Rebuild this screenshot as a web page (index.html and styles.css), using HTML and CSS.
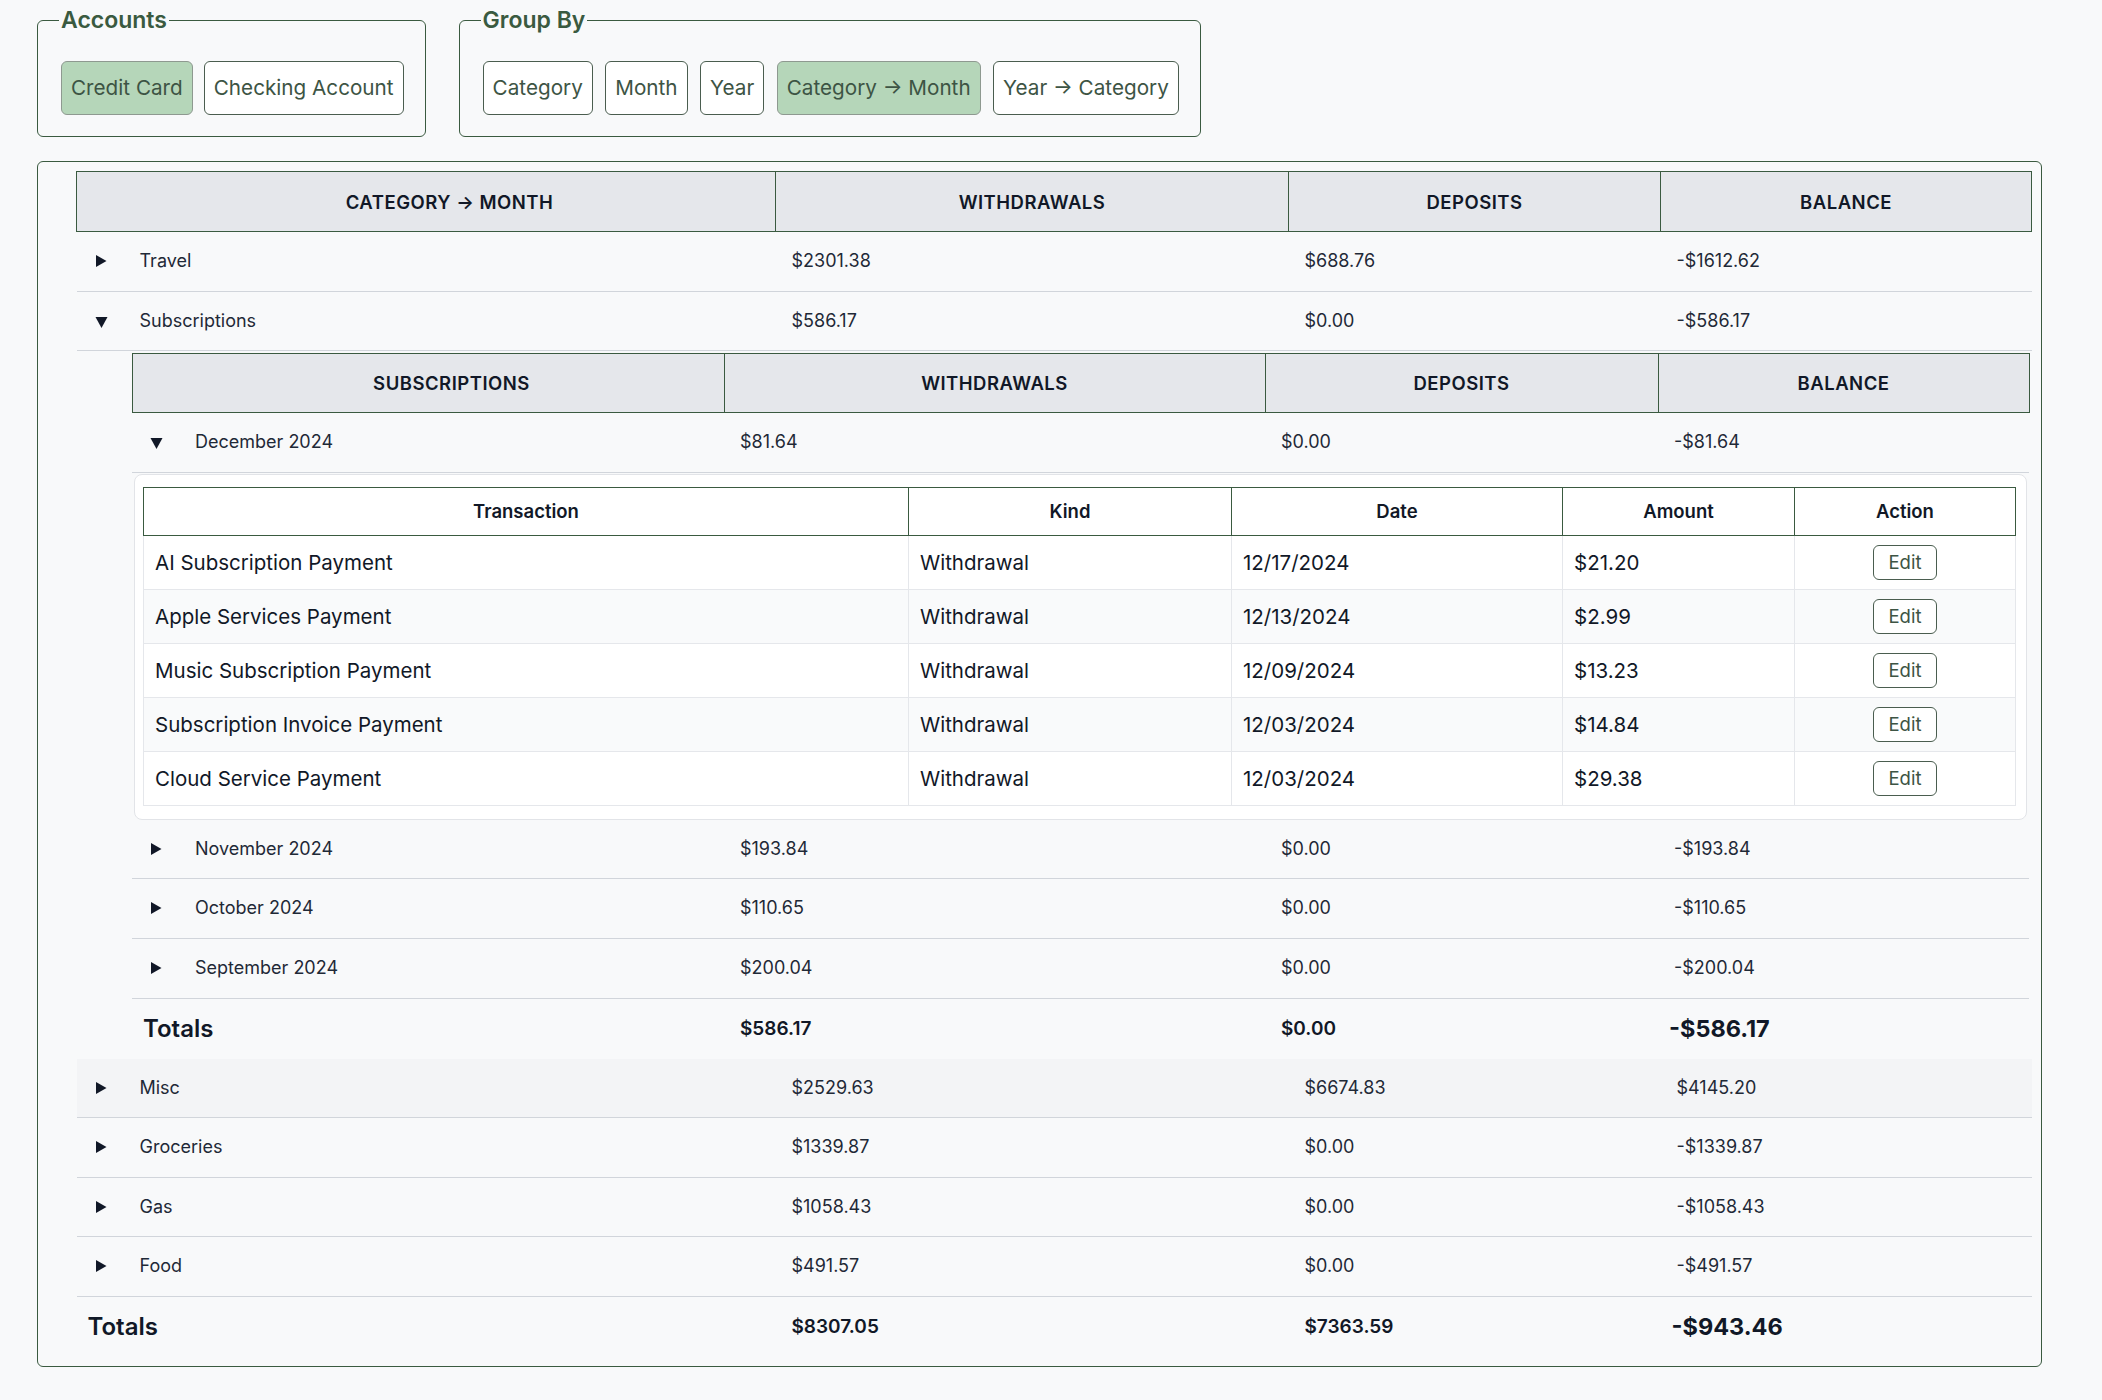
FILE: index.html
```html
<!DOCTYPE html>
<html lang="en">
<head>
<meta charset="utf-8">
<title>Report</title>
<link rel="stylesheet" href="styles.css">
</head>
<body>
<div class="page">
  <div class="filters">
    <fieldset class="group">
      <legend>Accounts</legend>
      <div class="btns">
        <button class="pill active">Credit Card</button>
        <button class="pill">Checking Account</button>
      </div>
    </fieldset>
    <fieldset class="group group-by">
      <legend>Group By</legend>
      <div class="btns">
        <button class="pill">Category</button>
        <button class="pill">Month</button>
        <button class="pill">Year</button>
        <button class="pill active">Category → Month</button>
        <button class="pill">Year → Category</button>
      </div>
    </fieldset>
  </div>

  <div class="panel">
    <table class="report main">
      <colgroup><col class="m1"><col class="m2"><col class="m3"><col class="m4"></colgroup>
      <thead>
        <tr><th class="first">Category → Month</th><th>Withdrawals</th><th>Deposits</th><th>Balance</th></tr>
      </thead>
      <tbody>
        <tr class="row">
          <td class="name"><span class="tog"><svg class="tri-r" viewBox="0 0 12 14"><path d="M1 1L11.5 7L1 13Z"/></svg></span>Travel</td>
          <td>$2301.38</td><td>$688.76</td><td>-$1612.62</td>
        </tr>
        <tr class="row">
          <td class="name"><span class="tog"><svg class="tri-d" viewBox="0 0 12 12"><path d="M0 1H12L6 12Z"/></svg></span>Subscriptions</td>
          <td>$586.17</td><td>$0.00</td><td>-$586.17</td>
        </tr>
        <tr class="nest-row">
          <td class="nest" colspan="4">
            <table class="report sub">
              <colgroup><col class="s1"><col class="s2"><col class="s3"><col class="s4"></colgroup>
              <thead>
                <tr><th class="first">Subscriptions</th><th>Withdrawals</th><th>Deposits</th><th>Balance</th></tr>
              </thead>
              <tbody>
                <tr class="row">
                  <td class="name"><span class="tog"><svg class="tri-d" viewBox="0 0 12 12"><path d="M0 1H12L6 12Z"/></svg></span>December 2024</td>
                  <td>$81.64</td><td>$0.00</td><td>-$81.64</td>
                </tr>
                <tr class="card-row">
                  <td class="card-cell" colspan="4">
                    <div class="card">
                      <table class="tx">
                        <colgroup><col class="t1"><col class="t2"><col class="t3"><col class="t4"><col class="t5"></colgroup>
                        <thead>
                          <tr><th>Transaction</th><th>Kind</th><th>Date</th><th>Amount</th><th>Action</th></tr>
                        </thead>
                        <tbody>
                          <tr><td>AI Subscription Payment</td><td>Withdrawal</td><td>12/17/2024</td><td>$21.20</td><td class="act"><button class="edit">Edit</button></td></tr>
                          <tr><td>Apple Services Payment</td><td>Withdrawal</td><td>12/13/2024</td><td>$2.99</td><td class="act"><button class="edit">Edit</button></td></tr>
                          <tr><td>Music Subscription Payment</td><td>Withdrawal</td><td>12/09/2024</td><td>$13.23</td><td class="act"><button class="edit">Edit</button></td></tr>
                          <tr><td>Subscription Invoice Payment</td><td>Withdrawal</td><td>12/03/2024</td><td>$14.84</td><td class="act"><button class="edit">Edit</button></td></tr>
                          <tr><td>Cloud Service Payment</td><td>Withdrawal</td><td>12/03/2024</td><td>$29.38</td><td class="act"><button class="edit">Edit</button></td></tr>
                        </tbody>
                      </table>
                    </div>
                  </td>
                </tr>
                <tr class="row">
                  <td class="name"><span class="tog"><svg class="tri-r" viewBox="0 0 12 14"><path d="M1 1L11.5 7L1 13Z"/></svg></span>November 2024</td>
                  <td>$193.84</td><td>$0.00</td><td>-$193.84</td>
                </tr>
                <tr class="row">
                  <td class="name"><span class="tog"><svg class="tri-r" viewBox="0 0 12 14"><path d="M1 1L11.5 7L1 13Z"/></svg></span>October 2024</td>
                  <td>$110.65</td><td>$0.00</td><td>-$110.65</td>
                </tr>
                <tr class="row">
                  <td class="name"><span class="tog"><svg class="tri-r" viewBox="0 0 12 14"><path d="M1 1L11.5 7L1 13Z"/></svg></span>September 2024</td>
                  <td>$200.04</td><td>$0.00</td><td>-$200.04</td>
                </tr>
                <tr class="totals">
                  <td class="tot-label">Totals</td>
                  <td class="tot-val">$586.17</td><td class="tot-val">$0.00</td><td class="tot-bal">-$586.17</td>
                </tr>
              </tbody>
            </table>
          </td>
        </tr>
        <tr class="row hover">
          <td class="name"><span class="tog"><svg class="tri-r" viewBox="0 0 12 14"><path d="M1 1L11.5 7L1 13Z"/></svg></span>Misc</td>
          <td>$2529.63</td><td>$6674.83</td><td>$4145.20</td>
        </tr>
        <tr class="row">
          <td class="name"><span class="tog"><svg class="tri-r" viewBox="0 0 12 14"><path d="M1 1L11.5 7L1 13Z"/></svg></span>Groceries</td>
          <td>$1339.87</td><td>$0.00</td><td>-$1339.87</td>
        </tr>
        <tr class="row">
          <td class="name"><span class="tog"><svg class="tri-r" viewBox="0 0 12 14"><path d="M1 1L11.5 7L1 13Z"/></svg></span>Gas</td>
          <td>$1058.43</td><td>$0.00</td><td>-$1058.43</td>
        </tr>
        <tr class="row">
          <td class="name"><span class="tog"><svg class="tri-r" viewBox="0 0 12 14"><path d="M1 1L11.5 7L1 13Z"/></svg></span>Food</td>
          <td>$491.57</td><td>$0.00</td><td>-$491.57</td>
        </tr>
        <tr class="totals">
          <td class="tot-label">Totals</td>
          <td class="tot-val">$8307.05</td><td class="tot-val">$7363.59</td><td class="tot-bal">-$943.46</td>
        </tr>
      </tbody>
    </table>
  </div>
</div>
</body>
</html>
```

FILE: styles.css
```css
* { box-sizing: border-box; }

body {
  margin: 0;
  background: #f8f9fa;
  font-family: Inter, "Liberation Sans", sans-serif;
  color: #1f2937;
}

.page {
  padding: 7px 60px 33px 37px;
}

/* ---------- filters ---------- */
.filters {
  display: flex;
  align-items: flex-start;
  gap: 33px;
}

.group {
  margin: 0;
  min-width: 0;
  border: 1px solid #3a5a40;
  border-radius: 6px;
  padding: 28px 21px 21px 23px;
}

.group legend {
  padding: 0 2px;
  margin-left: -2px;
  font-size: 23px;
  font-weight: 600;
  line-height: 26px;
  color: #3a5a40;
}

.btns {
  display: flex;
  gap: 11px;
}

.group-by .btns {
  gap: 12.5px;
}

.pill {
  font-family: inherit;
  font-size: 20.7px;
  line-height: 24px;
  padding: 14px 9px;
  border: 1px solid #4a5d4f;
  border-radius: 6px;
  background: #ffffff;
  color: #3d5444;
}

.pill.active {
  background: #b5d6b9;
  border-color: #8e9990;
}

/* ---------- report panel ---------- */
.panel {
  margin-top: 24px;
  border: 1px solid #3a5a40;
  border-radius: 6px;
  padding: 9px 10px 9px 38px;
}

.report {
  width: 100%;
  border-collapse: collapse;
  table-layout: fixed;
}

.main .m1 { width: 699px; }
.main .m2 { width: 513px; }
.main .m3 { width: 372px; }
.main .m4 { width: 371px; }

.sub .s1 { width: 592px; }
.sub .s2 { width: 541px; }
.sub .s3 { width: 393px; }
.sub .s4 { width: 371px; }

.report th {
  background: #e5e7eb;
  border: 1px solid #3a5a40;
  color: #111827;
  font-size: 18.5px;
  font-weight: 600;
  text-transform: uppercase;
  letter-spacing: 0.5px;
  line-height: 26px;
  padding: 16.5px 16px;
  text-align: center;
}

.report th.first {
  padding-left: 63px;
}

.sub th {
  padding-top: 16px;
  padding-bottom: 16px;
}

.report td {
  padding: 17px 16px;
  font-size: 18px;
  line-height: 24.6px;
  border-bottom: 1px solid #d1d5db;
  color: #1f2937;
  white-space: nowrap;
}

.report td.name {
  padding-left: 18px;
}

.tog {
  display: inline-block;
  width: 45px;
}

.tri-r {
  width: 12px;
  height: 14px;
  fill: #111827;
  vertical-align: -1px;
}

.tri-d {
  width: 13px;
  height: 12px;
  fill: #111827;
  vertical-align: -1px;
}

.report tr.hover td {
  background: #f3f4f6;
}

.report td.nest {
  padding: 2px 3px 0 55px;
  border-bottom: none;
}

.report td.card-cell {
  padding: 1px 2px 0 2px;
  border-bottom: none;
}

.report tr.totals td {
  border-top: 1px solid #3a5a40;
  border-bottom: none;
  line-height: 26px;
  padding: 17px 16px;
  color: #111827;
}

.report tr.totals td.tot-label {
  padding-left: 11px;
  font-size: 24px;
  font-weight: 600;
}

.report tr.totals td.tot-val {
  font-size: 19px;
  font-weight: 600;
}

.report tr.totals td.tot-bal {
  padding-left: 11px;
  font-size: 23.5px;
  font-weight: 700;
}

/* ---------- transactions card ---------- */
.card {
  background: #ffffff;
  border: 1px solid #e2e4e8;
  border-radius: 8px;
  padding: 12px 10px 13px 8px;
}

.tx {
  width: 100%;
  border-collapse: collapse;
  table-layout: fixed;
}

.tx .t1 { width: 765px; }
.tx .t2 { width: 323px; }
.tx .t3 { width: 331px; }
.tx .t4 { width: 232px; }
.tx .t5 { width: 221px; }

.tx th {
  border: 1px solid #3a5a40;
  background: #ffffff;
  color: #111827;
  font-size: 18.5px;
  font-weight: 600;
  text-transform: none;
  letter-spacing: 0;
  line-height: 25px;
  padding: 11px;
  text-align: center;
}

.tx td {
  border: 1px solid #e5e7eb;
  background: #ffffff;
  color: #111827;
  font-size: 20.5px;
  line-height: 27px;
  padding: 13px 11px;
  white-space: nowrap;
}

.tx tbody tr:nth-child(even) td {
  background: #f9fafb;
}

.tx td.act {
  text-align: center;
  padding: 9px 11px;
  line-height: 0;
}

.edit {
  display: inline-block;
  vertical-align: top;
  font-family: inherit;
  font-size: 18.5px;
  line-height: 33px;
  padding: 0 15px;
  border: 1px solid #4a5d4f;
  border-radius: 6px;
  background: #ffffff;
  color: #3d5444;
}
```
